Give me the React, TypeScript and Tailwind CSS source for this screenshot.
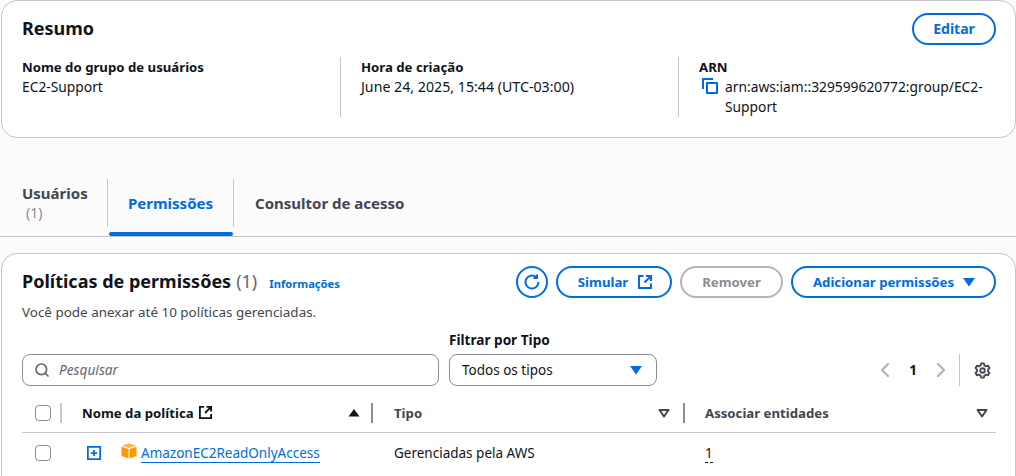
import { Search, ChevronLeft, ChevronRight } from 'lucide-react';

function ExternalIcon({ className }: { className: string }) {
  return (
    <svg viewBox="0 0 16 16" fill="none" stroke="currentColor" strokeWidth="2" className={className}>
      <path d="M6.5 2H2v12h12V9.5" />
      <path d="M9 2h5v5M14 2L7.5 8.5" />
    </svg>
  );
}

function CaretDown({ className }: { className: string }) {
  return (
    <svg viewBox="0 0 16 16" className={className} fill="currentColor">
      <path d="M2 4h12L8 12.5z" />
    </svg>
  );
}

function CaretOutline() {
  return (
    <svg viewBox="0 0 16 16" className="h-4 w-4 text-[#424650]" fill="none" stroke="currentColor" strokeWidth="2" strokeLinejoin="round">
      <path d="M3.5 5h9L8 11.5z" />
    </svg>
  );
}

function Checkbox() {
  return <div className="h-4 w-4 rounded-[4px] border-[1.5px] border-[#8c8c94] bg-white" />;
}

function Field({ label, children, divider }: { label: string; children: React.ReactNode; divider?: boolean }) {
  return (
    <div className={divider ? 'h-[60px] border-l border-[#c6c6cd] pl-5' : 'h-[60px]'}>
      <div className="text-[13.2px] font-bold leading-5 text-[#0f141a]">{label}</div>
      {children}
    </div>
  );
}

export default function App() {
  return (
    <div className="h-[476px] w-[1016px] overflow-hidden bg-[#fbfbfc] font-['Noto_Sans',sans-serif] text-[13.5px] leading-5 text-[#0f141a]">
      {/* Resumo */}
      <section className="ml-px h-[138px] rounded-2xl border border-[#c6c6cd] bg-white pl-5 pr-[19px] pt-[12px]">
        <div className="flex h-[33px] items-start justify-between">
          <h2 className="text-[18px] font-bold leading-[30px]">Resumo</h2>
          <button className="h-[32px] w-[84px] rounded-full border-2 border-[#006ce0] text-[14px] font-bold text-[#006ce0]">Editar</button>
        </div>
        <div className="mt-[11px] grid grid-cols-[318px_338px_1fr] gap-0">
          <Field label="Nome do grupo de usuários">
            <div className="text-[13.8px]">EC2-Support</div>
          </Field>
          <Field label="Hora de criação" divider>
            <div className="text-[14.2px]">June 24, 2025, 15:44 (UTC-03:00)</div>
          </Field>
          <Field label="ARN" divider>
            <div className="flex">
              <svg viewBox="0 0 16 16" className="ml-[3px] mr-[7px] mt-px h-4 w-4 shrink-0 text-[#006ce0]" fill="none" stroke="currentColor" strokeWidth="2">
                <path d="M1 11V1h10" />
                <rect x="5" y="5" width="10" height="10" />
              </svg>
              <span className="w-[262px] text-[13.8px]">arn:aws:iam::329599620772:group/EC2-Support</span>
            </div>
          </Field>
        </div>
      </section>

      {/* Abas */}
      <nav className="mt-[41px] flex h-[58px] items-start border-b border-[#c6c6cd] text-[15px]">
        <div className="ml-[22px] w-[85px] pt-[4px]">
          <div className="font-bold text-[#424650]">Usuários</div>
          <div className="ml-[4px] text-[14px] text-[#8c8c94]">(1)</div>
        </div>
        <div className="relative flex h-[48px] w-[127px] items-center justify-center border-x border-[#c6c6cd] pb-px font-bold text-[#006ce0]">
          Permissões
          <div className="absolute -bottom-[9px] left-px right-0 h-1 rounded-sm bg-[#006ce0]" />
        </div>
        <div className="flex h-[48px] items-center pb-px pl-[21px] font-bold text-[#424650]">Consultor de acesso</div>
      </nav>

      {/* Politicas */}
      <section className="ml-px mt-[16px] h-[240px] rounded-2xl border border-[#c6c6cd] bg-white pl-5 pr-[19px] pt-[12px]">
        <div className="flex items-start justify-between">
          <div>
            <div className="flex items-baseline">
              <h2 className="text-[18px] font-bold leading-[30px]">Políticas de permissões</h2>
              <span className="ml-[5px] text-[18px] text-[#656871]">(1)</span>
              <span className="ml-[12px] text-[11.2px] font-bold text-[#006ce0]">Informações</span>
            </div>
            <p className="mt-[6px] text-[13.45px] leading-[20px] text-[#424650]">Você pode anexar até 10 políticas gerenciadas.</p>
          </div>
          <div className="flex items-center gap-2">
            <button className="flex h-[32px] w-[32px] items-center justify-center rounded-full border-2 border-[#006ce0] text-[#006ce0]">
              <svg viewBox="0 0 16 16" className="h-4 w-4" fill="none" stroke="currentColor" strokeWidth="2">
                <path d="M14.5 8A6.5 6.5 0 1 1 12 2.9" />
                <path d="M13 0.5V4H9.5" />
              </svg>
            </button>
            <button className="flex h-[32px] w-[116px] items-center justify-center gap-[9px] rounded-full border-2 border-[#006ce0] pl-[3px] text-[13.2px] font-bold text-[#006ce0]">
              Simular
              <ExternalIcon className="h-4 w-4" />
            </button>
            <button className="h-[32px] w-[103px] rounded-full border-2 border-[#b4b4bb] text-[13.2px] font-bold text-[#8c8c94]">Remover</button>
            <button className="flex h-[32px] w-[205px] items-center justify-center gap-[7px] rounded-full border-2 border-[#006ce0] pl-[3px] text-[13.2px] font-bold text-[#006ce0]">
              Adicionar permissões
              <CaretDown className="h-4 w-4" />
            </button>
          </div>
        </div>

        <div className="mt-[8px] flex items-end">
          <div className="flex h-[32px] w-[417px] items-center rounded-lg border border-[#8c8c94] pl-[11px]">
            <Search className="h-4 w-4 text-[#656871]" strokeWidth={2.5} />
            <span className="ml-[9px] text-[13.7px] italic text-[#656871]">Pesquisar</span>
          </div>
          <div className="ml-[10px]">
            <div className="mb-[4px] text-[13.6px] font-bold">Filtrar por Tipo</div>
            <div className="flex h-[32px] w-[208px] items-center justify-between rounded-lg border border-[#8c8c94] pl-3 pr-3">
              <span>Todos os tipos</span>
              <CaretDown className="h-4 w-4 text-[#006ce0]" />
            </div>
          </div>
          <div className="ml-auto flex h-[32px] items-center">
            <ChevronLeft className="h-6 w-6 text-[#b4b4bb]" strokeWidth={2.4} />
            <span className="ml-[12px] font-bold">1</span>
            <ChevronRight className="ml-[12px] h-6 w-6 text-[#b4b4bb]" strokeWidth={2.4} />
            <div className="ml-[6px] h-[32px] border-l border-[#c6c6cd]" />
            <svg viewBox="0 0 24 24" className="ml-[14px] mr-[5px] h-[17px] w-[17px] text-[#424650]" fill="none" stroke="currentColor" strokeWidth="2.6" strokeLinejoin="round">
              <circle cx="12" cy="12" r="3.2" />
              <path d="M10 2h4l.7 3 2.2 1.2 3-.9 2 3.4-2.2 2.1v2.4l2.2 2.1-2 3.4-3-.9-2.2 1.2-.7 3h-4l-.7-3-2.2-1.2-3 .9-2-3.4 2.2-2.1v-2.4L2.1 8.7l2-3.4 3 .9 2.2-1.2z" />
            </svg>
          </div>
        </div>

        {/* Tabela */}
        <div className="mt-[7px] grid h-[40px] grid-cols-[60px_291px_312px_1fr] items-center border-b border-[#c6c6cd] text-[13.2px]">
          <div className="flex items-center pl-[13px]">
            <Checkbox />
            <div className="ml-[9px] h-5 w-[2px] bg-[#c6c6cd]" />
          </div>
          <div className="flex items-center justify-between font-bold">
            <div className="flex items-center gap-[4px]">
              Nome da política
              <ExternalIcon className="h-[15px] w-[15px]" />
            </div>
            <div className="flex items-center">
              <svg viewBox="0 0 16 16" className="h-4 w-4" fill="currentColor"><path d="M2.5 11.5h11L8 4z" /></svg>
              <div className="ml-[9px] h-5 w-[2px] bg-[#8c8c94]" />
            </div>
          </div>
          <div className="flex items-center justify-between pl-[21px] font-bold text-[#424650]">
            Tipo
            <div className="flex items-center">
              <CaretOutline />
              <div className="ml-[11px] h-5 w-[2px] bg-[#8c8c94]" />
            </div>
          </div>
          <div className="flex items-center justify-between pl-[20px] pr-[6px] font-bold text-[#424650]">
            Associar entidades
            <CaretOutline />
          </div>
        </div>
        <div className="grid h-[40px] grid-cols-[60px_291px_312px_1fr] items-center">
          <div className="pl-[13px]"><Checkbox /></div>
          <div className="flex items-center pl-[5px]">
            <svg viewBox="0 0 16 16" className="h-[14px] w-[14px] text-[#006ce0]" fill="none" stroke="currentColor" strokeWidth="2">
              <rect x="1" y="1" width="14" height="14" />
              <path d="M4.5 8h7M8 4.5v7" />
            </svg>
            <svg viewBox="0 0 16 16" className="ml-[20px] h-[16px] w-[16px] -translate-y-[2px]">
              <path d="M8 0.5l7.5 2.3L8 5 .5 2.8z" fill="#ffb347" />
              <path d="M.5 3.8L7.5 6v9.5L.5 13z" fill="#ff9900" />
              <path d="M15.5 3.8L8.5 6v9.5l7-2.5z" fill="#ff9900" />
            </svg>
            <a className="ml-[4px] border-b border-[#006ce0] leading-[18px] text-[#006ce0]">AmazonEC2ReadOnlyAccess</a>
          </div>
          <div className="pl-[21px]">Gerenciadas pela AWS</div>
          <div className="pl-[20px]">
            <span className="border-b border-dashed border-[#0f141a] leading-[18px]">1</span>
          </div>
        </div>
      </section>
    </div>
  );
}
